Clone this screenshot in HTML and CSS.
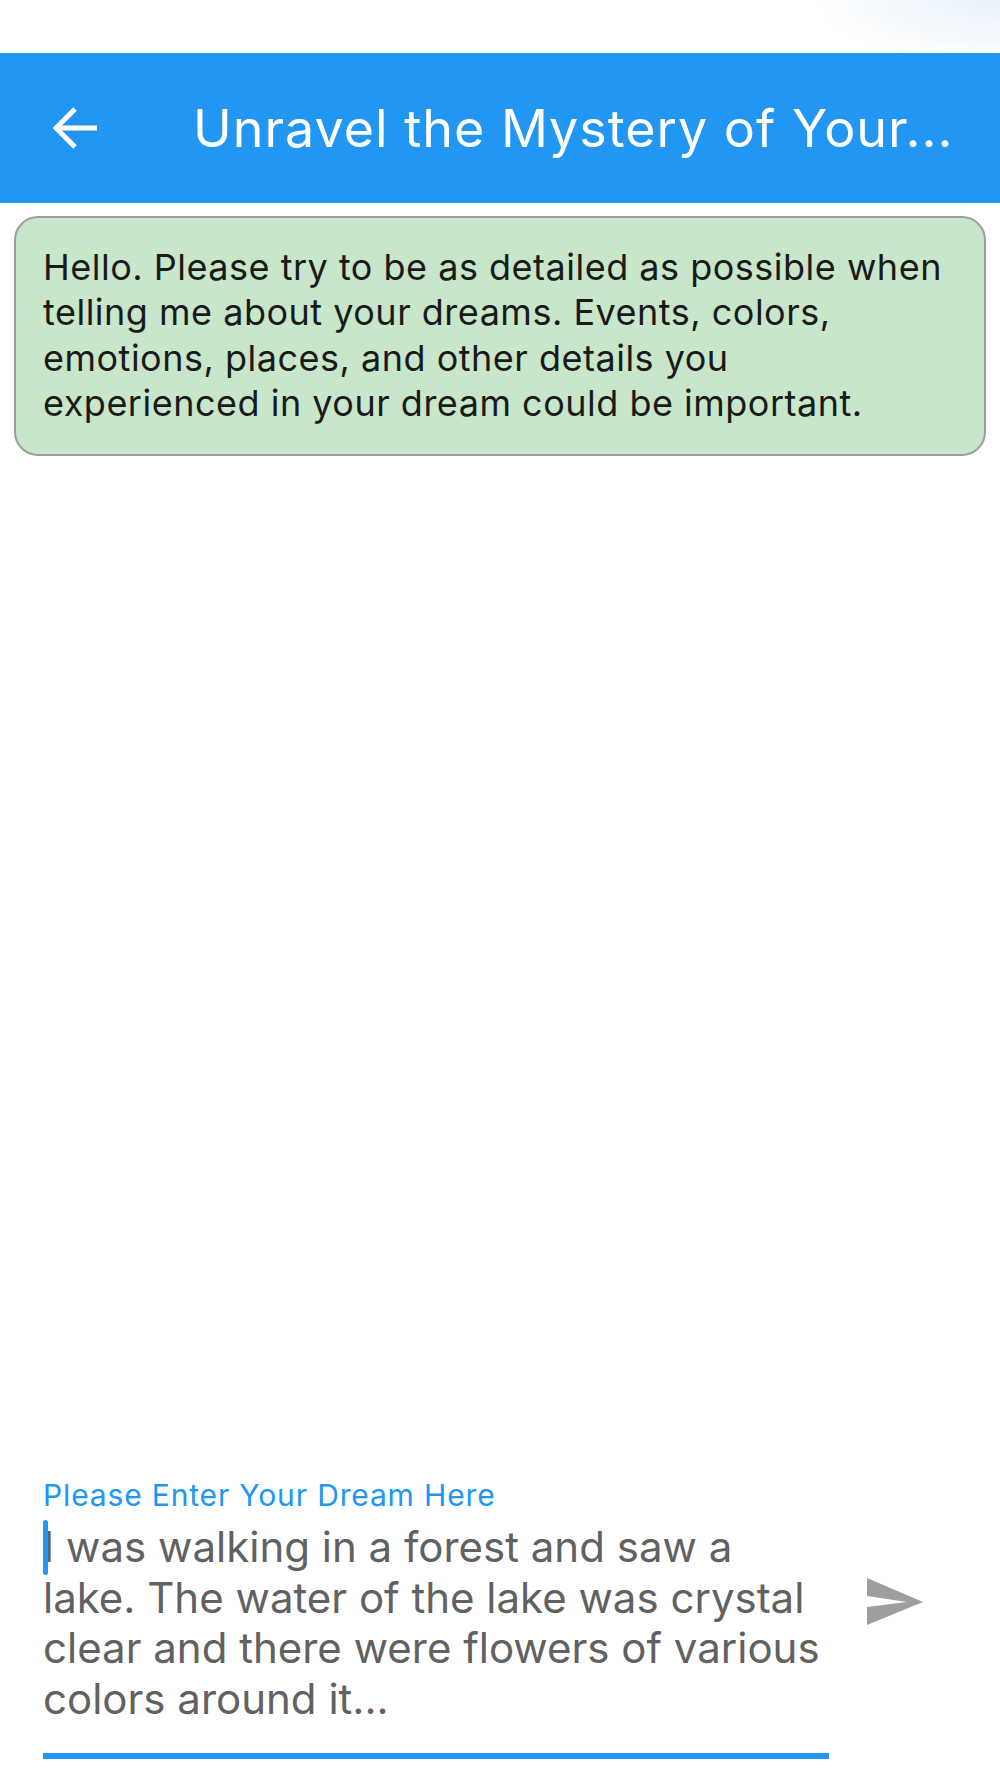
FILE: index.html
```html
<!DOCTYPE html>
<html lang="en">
<head>
	<meta charset="UTF-8">
	<meta name="viewport" content="width=device-width, initial-scale=1.0">
	<title>Unravel the Mystery of Your Dreams</title>
	<link rel="stylesheet" href="styles.css">
</head>
<body>
	<div class="page">
		<div class="statusBar"></div>
		<header class="appBar">
			<svg class="backIcon" viewBox="0 0 46 44" width="46" height="44">
				<path d="M44 22H3M22 3L3 22l19 19" fill="none" stroke="#fff" stroke-width="5"/>
			</svg>
			<h1 class="title">Unravel the Mystery of Your...</h1>
		</header>
		<main class="chat">
			<p class="bubble">Hello. Please try to be as detailed as possible when telling me about your dreams. Events, colors, emotions, places, and other details you experienced in your dream could be important.</p>
		</main>
		<footer class="composer">
			<div class="field">
				<label class="fieldLabel">Please Enter Your Dream Here</label>
				<div class="hint">
					<span class="cursor"></span>
					I was walking in a forest and saw a lake. The water of the lake was crystal clear and there were flowers of various colors around it...
				</div>
			</div>
			<svg class="sendIcon" viewBox="0 0 56 48" width="56" height="48">
				<path d="M0 0L56 24 0 47V29L40 24 0 18Z" fill="#9e9e9e"/>
			</svg>
		</footer>
	</div>
</body>
</html>
```

FILE: styles.css
```css
* {
	box-sizing: border-box;
}
body {
	margin: 0;
	font-family: 'Inter', 'Liberation Sans', sans-serif;
	background-color: #fff;
}
.page {
	height: 1778px;
	display: flex;
	flex-direction: column;
	overflow: hidden;
}
.statusBar {
	height: 53px;
	background: radial-gradient(ellipse 180px 60px at 100% 0, #e6f1fa, #fff);
}
.appBar {
	height: 150px;
	padding: 0 0 0 53px;
	display: flex;
	align-items: center;
	background-color: #2196f3;
}
.backIcon {
	flex: none;
	margin-right: 94px;
}
.title {
	margin: 0;
	font-size: 52px;
	font-weight: 400;
	letter-spacing: 1px;
	color: #fff;
	white-space: nowrap;
}
.chat {
	flex: 1;
	padding: 13px 14px;
}
.bubble {
	margin: 0;
	height: 240px;
	padding: 27px 40px 0 27px;
	border: 2px solid #9e9e9e;
	border-radius: 24px;
	background-color: #c8e6c9;
	font-size: 36px;
	line-height: 45.4px;
	letter-spacing: 0.5px;
	color: #1a1a1a;
}
.composer {
	height: 301px;
	padding: 0 0 19px 43px;
	display: flex;
	align-items: flex-end;
}
.field {
	width: 786px;
	height: 282px;
	border-bottom: 6px solid #2196f3;
}
.fieldLabel {
	display: block;
	font-size: 30px;
	line-height: 36px;
	letter-spacing: 0.85px;
	color: #2196f3;
}
.hint {
	position: relative;
	margin-top: 9px;
	font-size: 42px;
	line-height: 50.6px;
	color: #616161;
}
.cursor {
	position: absolute;
	left: 0;
	top: -2px;
	width: 5px;
	height: 55px;
	border-radius: 3px;
	background-color: #2196f3;
}
.sendIcon {
	flex: none;
	margin: 0 0 133px 38px;
}
```
